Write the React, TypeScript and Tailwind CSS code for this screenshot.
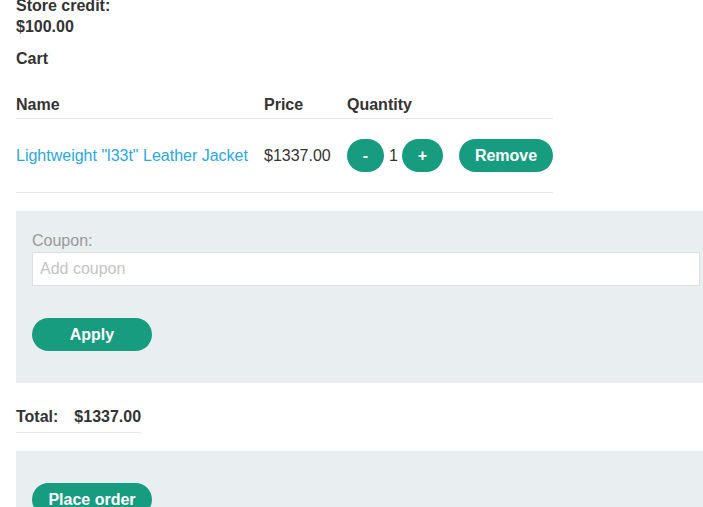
import React from "react";

export default function App() {
  return (
    <div
      className="w-[703px] h-[507px] overflow-hidden bg-white text-[#333] text-[16px]"
      style={{ fontFamily: '"Liberation Sans", Arial, sans-serif' }}
    >
      <div className="pl-4 -mt-[5px]">
        <div className="font-bold leading-[21px]">
          <div>Store credit:</div>
          <div>$100.00</div>
        </div>
        <div className="font-bold leading-[21px] mt-[11px]">Cart</div>
        <div className="w-[537px] mt-[19px]">
          <div className="grid grid-cols-[248px_83px_112px_94px] h-[31px] items-center border-b border-[#e6e6e6] font-bold pt-[4px] pb-[1px]">
            <div>Name</div>
            <div>Price</div>
            <div>Quantity</div>
            <div></div>
          </div>
          <div className="grid grid-cols-[248px_83px_112px_94px] h-[74px] items-center border-b border-[#e6e6e6]">
            <div className="text-[#2aa8e0]">Lightweight "l33t" Leather Jacket</div>
            <div>$1337.00</div>
            <div className="flex items-center">
              <button className="w-[37px] h-[33px] rounded-full bg-[#189c80] text-white font-bold">-</button>
              <span className="ml-[5px] mr-[4px]">1</span>
              <button className="w-[41px] h-[33px] rounded-full bg-[#189c80] text-white font-bold">+</button>
            </div>
            <div>
              <button className="w-[94px] h-[33px] rounded-full bg-[#189c80] text-white font-bold">Remove</button>
            </div>
          </div>
        </div>
        <div className="mt-[18px] bg-[#e9eef0] h-[172px] w-[700px] pl-4 pt-[21px]">
          <div className="text-[#999] leading-[18px]">Coupon:</div>
          <input
            className="mt-[2px] w-[668px] h-[34px] bg-white border border-[#dedede] px-[7px] outline-none placeholder:text-[#c4c4c4] text-[16px]"
            placeholder="Add coupon"
          />
          <button className="mt-[32px] block w-[120px] h-[33px] rounded-full bg-[#189c80] text-white font-bold">Apply</button>
        </div>
        <div className="mt-[25px] inline-flex font-bold leading-[18px] pb-[6px] border-b border-[#e6e6e6]">
          <span>Total:</span>
          <span className="ml-[16px]">$1337.00</span>
        </div>
        <div className="mt-[18px] bg-[#e9eef0] h-[120px] w-[700px] pl-4 pt-[32px]">
          <button className="block w-[120px] h-[33px] rounded-full bg-[#189c80] text-white font-bold">Place order</button>
        </div>
      </div>
    </div>
  );
}
